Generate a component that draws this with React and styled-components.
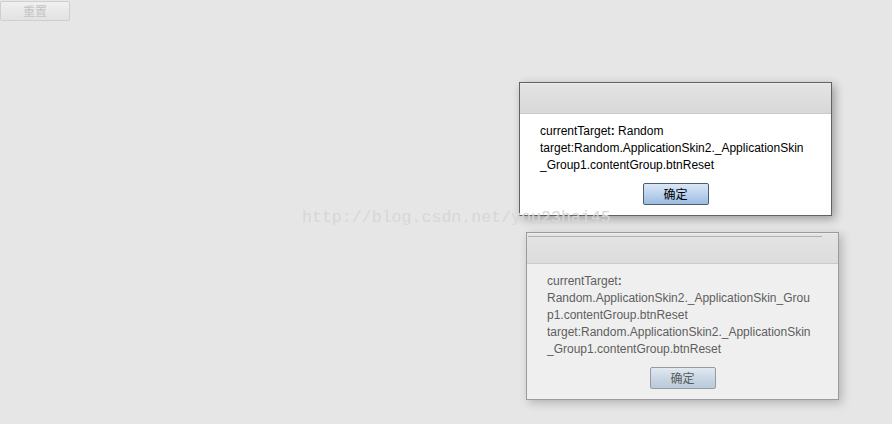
import React from "react";
import styled, { createGlobalStyle } from "styled-components";

const GlobalStyle = createGlobalStyle`
  html, body {
    margin: 0;
    padding: 0;
    background: #e6e6e6;
  }
  body {
    font-family: "Liberation Sans", Arial, "Noto Sans CJK SC", sans-serif;
  }
`;

const Page = styled.div`
  position: relative;
  width: 892px;
  height: 424px;
  overflow: hidden;
  background: #e6e6e6;
`;

const Toolbar = styled.div`
  display: flex;
  padding-top: 1px;
`;

const ResetButton = styled.button`
  width: 70px;
  height: 20px;
  padding: 0;
  border: 1px solid #cfcfcf;
  border-radius: 2px;
  background: linear-gradient(#f0f0f0, #e2e2e2);
  color: #c4c4c4;
  font-family: "Noto Sans CJK SC", sans-serif;
  font-size: 12px;
  line-height: 18px;
`;

const Watermark = styled.div`
  position: absolute;
  left: 302px;
  top: 208px;
  font-family: "Liberation Mono", "Courier New", monospace;
  font-size: 16.6px;
  color: #d7d7d7;
  white-space: nowrap;
  pointer-events: none;
  z-index: 3;
`;

const Dialog = styled.div`
  position: absolute;
  left: ${(p) => p.$x}px;
  top: ${(p) => p.$y}px;
  width: 311px;
  display: flex;
  flex-direction: column;
  border: 1px solid ${(p) => (p.$faded ? "#9b9b9b" : "#626262")};
  background: ${(p) => (p.$faded ? "#efefef" : "#ffffff")};
  box-shadow: 3px 3px 9px rgba(0, 0, 0, ${(p) => (p.$faded ? 0.22 : 0.32)});
  z-index: ${(p) => (p.$faded ? 1 : 2)};
`;

const TitleBar = styled.div`
  position: relative;
  height: 30px;
  border-bottom: 1px solid #cacaca;
  background: ${(p) =>
    p.$faded
      ? "linear-gradient(#e4e4e4, #dcdcdc)"
      : "linear-gradient(#e4e4e4, #d8d8d8)"};
  box-shadow: inset 0 1px 0 #ececec;
`;

const TitleRule = styled.div`
  margin: 3px 16px 0 1px;
  height: 1px;
  background: #b0b0b0;
`;

const Body = styled.div`
  display: flex;
  flex-direction: column;
  align-items: center;
  padding: 9px 0 10px;
  gap: 9px;
`;

const Message = styled.div`
  align-self: stretch;
  padding: 0 24px 0 20px;
  font-size: 12px;
  line-height: 17px;
  color: ${(p) => (p.$faded ? "#5e5e5e" : "#000000")};
  overflow-wrap: anywhere;
  white-space: pre-line;
`;

const Colon = styled.b`
  font-weight: bold;
`;

const OkButton = styled.button`
  width: 66px;
  height: 22px;
  padding: 0;
  border: 1px solid ${(p) => (p.$faded ? "#9a9a9a" : "#4f5d70")};
  border-radius: 2px;
  background: ${(p) =>
    p.$faded
      ? "linear-gradient(#e2e9f1, #c7d5e3 55%, #b9cadb)"
      : "linear-gradient(#dbe8f6, #b8d0ec 55%, #9cbce2)"};
  color: ${(p) => (p.$faded ? "#5a5a5a" : "#000000")};
  font-family: "Noto Sans CJK SC", sans-serif;
  font-size: 12px;
  line-height: 20px;
`;

const App = () => {
  return (
    <Page>
      <GlobalStyle />
      <Toolbar>
        <ResetButton>重置</ResetButton>
      </Toolbar>

      <Dialog $x={519} $y={82}>
        <TitleBar />
        <Body>
          <Message>
            currentTarget<Colon>:</Colon> Random{"\n"}
            target:Random.ApplicationSkin2._ApplicationSkin_Group1.contentGroup.btnReset
          </Message>
          <OkButton>确定</OkButton>
        </Body>
      </Dialog>

      <Dialog $x={526} $y={232} $faded>
        <TitleBar $faded>
          <TitleRule />
        </TitleBar>
        <Body>
          <Message $faded>
            currentTarget<Colon>:</Colon>{" "}
            Random.ApplicationSkin2._ApplicationSkin_Group1.contentGroup.btnReset{"\n"}
            target:Random.ApplicationSkin2._ApplicationSkin_Group1.contentGroup.btnReset
          </Message>
          <OkButton $faded>确定</OkButton>
        </Body>
      </Dialog>

      <Watermark>http://blog.csdn.net/you23hai45</Watermark>
    </Page>
  );
};

export default App;
